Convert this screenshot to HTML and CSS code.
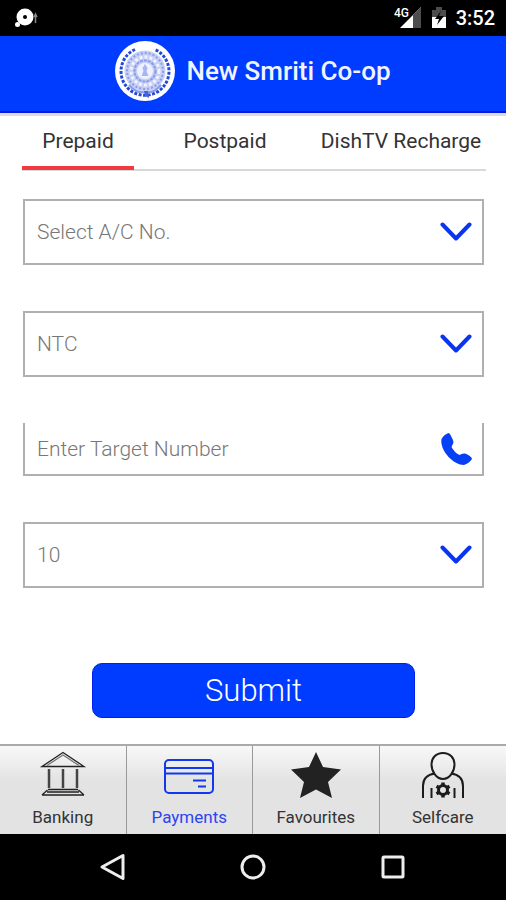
FILE: index.html
```html
<!DOCTYPE html>
<html lang="en">
<head>
    <meta charset="UTF-8">
    <meta name="viewport" content="width=device-width, initial-scale=1.0">
    <title>New Smriti Co-op</title>
    <link rel="stylesheet" href="styles.css">
</head>
<body>
    <div class="status-bar">
        <svg width="24" height="20" viewBox="0 0 24 20">
            <circle cx="10" cy="9" r="8.5" fill="#fff"/>
            <circle cx="10" cy="9" r="2" fill="#000"/>
            <circle cx="2.5" cy="16.5" r="2.5" fill="#fff"/>
            <path d="M20.5 7v8M19 9l1.5-3 1.5 3" fill="none" stroke="#888" stroke-width="1.5"/>
        </svg>
        <div class="status-right">
            <svg width="28" height="24" viewBox="0 0 28 24">
                <path d="M6 22L27 1v21z" fill="#fff"/>
                <path d="M19 9l8-8v21h-8z" fill="#4d4d4d"/>
                <path d="M0 0h15v11H0z" fill="#000"/>
                <text x="0" y="11" class="network">4G</text>
            </svg>
            <svg width="16" height="24" viewBox="0 0 16 24">
                <path d="M1 4h4V1h6v3h4v8H1z" fill="#4d4d4d"/>
                <path d="M1 11h14v11H1z" fill="#fff"/>
                <path d="M10 5l-6 8h4l-2 6 7-9H8z" fill="#000"/>
            </svg>
            <span class="time">3:52</span>
        </div>
    </div>

    <header class="header">
        <svg width="60" height="60" viewBox="0 0 60 60">
            <circle cx="30" cy="30" r="30" fill="#fff"/>
            <path d="M20 8.5A24 24 0 1 0 40 8.5" fill="none" stroke="#2447dc" stroke-width="3" stroke-dasharray="3 1.5"/>
            <circle cx="30" cy="30" r="20.5" fill="#c6cff5"/>
            <circle cx="30" cy="30" r="18" fill="none" stroke="#8b9ce8" stroke-width="2" stroke-dasharray="2 2"/>
            <circle cx="30" cy="30" r="14" fill="none" stroke="#f0f3ff" stroke-width="3" stroke-dasharray="3 2"/>
            <circle cx="30" cy="30" r="10.5" fill="none" stroke="#8b9ce8" stroke-width="2" stroke-dasharray="3 1"/>
            <circle cx="30" cy="30" r="8" fill="#eef1ff"/>
            <path d="M30 23l2.5 4-1 3 2 5h-7l2-5-1-3z" fill="#a8b6ef"/>
            <path d="M14 44q8 9 16 7 8 2 16-7" fill="none" stroke="#8b9ce8" stroke-width="2"/>
            <path d="M29 50h4l1 7-4-2z" fill="#4764dd"/>
        </svg>
        <h1>New Smriti Co-op</h1>
    </header>

    <main>
        <nav class="tabs">
            <a href="#prepaid" class="active">Prepaid</a>
            <a href="#postpaid">Postpaid</a>
            <a href="#dishtv">DishTV Recharge</a>
        </nav>

        <form class="form">
            <div class="field">
                <select aria-label="Account number">
                    <option>Select A/C No.</option>
                </select>
                <svg width="32" height="20" viewBox="0 0 32 20"><path d="M2.5 2.5L16 16.5 29.5 2.5" class="chevron"/></svg>
            </div>
            <div class="field">
                <select aria-label="Operator">
                    <option>NTC</option>
                </select>
                <svg width="32" height="20" viewBox="0 0 32 20"><path d="M2.5 2.5L16 16.5 29.5 2.5" class="chevron"/></svg>
            </div>
            <div class="field number">
                <input type="tel" placeholder="Enter Target Number" aria-label="Target number">
                <svg width="32" height="32" viewBox="0 0 32 32">
                    <path d="M8.500 0Q4 1.500 1.500 6C-.5 17 13 32 24 32Q29 30.500 32 26Q31.500 23 25 20.500Q22 20 19.500 22 14 19 11.500 14L13.500 9.500 13 7 10.500 2Q9.500 0 8.500 0z" fill="#0540f5"/>
                </svg>
            </div>
            <div class="field">
                <select aria-label="Amount">
                    <option>10</option>
                </select>
                <svg width="32" height="20" viewBox="0 0 32 20"><path d="M2.5 2.5L16 16.5 29.5 2.5" class="chevron"/></svg>
            </div>
            <button type="submit" class="submit">Submit</button>
        </form>
    </main>

    <nav class="bottom-nav">
        <a href="#banking">
            <svg width="50" height="48" viewBox="0 0 50 48" fill="none" stroke="#222" stroke-width="1.3">
                <path d="M4 15.5L25 1.5l21 14z"/>
                <path d="M9 14.5L25 4l16 10.500" stroke="#777"/>
                <path d="M11 18v19M25 18v19M39 18v19" stroke-width="2.5" stroke="#444"/>
                <path d="M10 38.5h30M4 44h42M9.5 39L4 44M40.5 39L46 44M9 41h32"/>
            </svg>
            <span>Banking</span>
        </a>
        <a href="#payments" class="active">
            <svg width="50" height="48" viewBox="0 0 50 48" fill="none" stroke="#1238ee" stroke-width="2">
                <rect x="1" y="9" width="48" height="33" rx="4"/>
                <path d="M1 17h48M1 22.5h48M29 29.5h13M34 35.5h8"/>
            </svg>
            <span>Payments</span>
        </a>
        <a href="#favourites">
            <svg width="50" height="48" viewBox="0 0 50 48">
                <path d="M25 1l7 15 18 2.5-13 12.5L41 47 25 38.5 9 47l4-16L0 18.5 18 16z" fill="#222"/>
            </svg>
            <span>Favourites</span>
        </a>
        <a href="#selfcare">
            <svg width="50" height="48" viewBox="0 0 50 48" fill="none" stroke="#1c1c1c" stroke-width="2">
                <path d="M25 2c-7 0-11.5 5-11.5 11.5C13.5 20 18 28 25 28s11.5-8 11.5-14.5C36.5 7 32 2 25 2z"/>
                <path d="M17 22.5Q5 24 5 35v12M33 22.5q12 1.5 12 12.5v12M13.5 37v10M36.5 37v10"/>
                <circle cx="25" cy="39" r="4.5" stroke-width="3"/>
                <path d="M25 31.5v4M25 42.5v4M18.5 35.2l3.5 2M28 40.8l3.5 2M31.5 35.2l-3.5 2M22 40.8l-3.5 2" stroke-width="3.5"/>
            </svg>
            <span>Selfcare</span>
        </a>
    </nav>

    <div class="system-nav">
        <button type="button" aria-label="Back">
            <svg width="28" height="28" viewBox="0 0 28 28"><path d="M3 14L24 2.5v23z"/></svg>
        </button>
        <button type="button" aria-label="Home">
            <svg width="28" height="28" viewBox="0 0 28 28"><circle cx="14" cy="14" r="11"/></svg>
        </button>
        <button type="button" aria-label="Recent apps">
            <svg width="28" height="28" viewBox="0 0 28 28"><rect x="4" y="4" width="20" height="20" rx="1"/></svg>
        </button>
    </div>
</body>
</html>
```
FILE: styles.css
```css
* {
    box-sizing: border-box;
}
body {
    margin: 0;
    min-height: 100vh;
    display: flex;
    flex-direction: column;
    font-family: Roboto, sans-serif;
    background: #fff;
}
a {
    text-decoration: none;
    color: #333;
}
svg {
    display: block;
    flex-shrink: 0;
}

/* status bar */
.status-bar {
    display: flex;
    align-items: center;
    justify-content: space-between;
    height: 36px;
    padding: 0 11px 0 15px;
    background: #000;
    color: #fff;
}
.status-right {
    display: flex;
    align-items: center;
    gap: 9px;
}
.network {
    font-size: 12px;
    font-weight: 500;
    fill: #fff;
}
.time {
    font-size: 20px;
    font-weight: 500;
}

/* header */
.header {
    display: flex;
    align-items: center;
    justify-content: center;
    gap: 11px;
    height: 80px;
    padding-bottom: 8px;
    background: #003cff;
    border-bottom: 3px solid #dcd8e4;
    box-shadow: inset 0 -2px 0 #0018e0;
}
.header h1 {
    margin: 0;
    font-size: 26px;
    font-weight: 500;
    color: #f0f4ff;
}

/* tabs */
main {
    flex: 1;
}
.tabs {
    display: grid;
    grid-template-columns: 112px 1fr 170px;
    height: 55px;
    margin: 0 20px 0 22px;
    border-bottom: 2px solid #d8d8d8;
}
.tabs a {
    height: 54px;
    padding-top: 13px;
    font-size: 21px;
    line-height: 25px;
    text-align: center;
    white-space: nowrap;
}
.tabs .active {
    border-bottom: 4px solid #f03a40;
}

/* form */
.form {
    display: flex;
    flex-direction: column;
    gap: 46px;
    padding: 28px 22px 26px 23px;
}
.field {
    display: grid;
    align-items: center;
    height: 66px;
    border: 2px solid #b0b0b0;
}
.field select,
.field input,
.field svg {
    grid-area: 1 / 1;
}
.field select,
.field input {
    appearance: none;
    width: 100%;
    height: 100%;
    padding: 0 50px 0 12px;
    border: 0;
    border-radius: 0;
    background: transparent;
    font-family: inherit;
    font-size: 21px;
    font-weight: 300;
    color: #777;
}
.field input::placeholder {
    color: #777;
}
.field svg {
    justify-self: end;
    margin-right: 10px;
    pointer-events: none;
}
.number {
    height: 53px;
    border-top: 0;
}
.chevron {
    fill: none;
    stroke: #0a35ee;
    stroke-width: 4;
    stroke-linecap: round;
    stroke-linejoin: round;
}
.submit {
    align-self: center;
    width: 70%;
    height: 55px;
    margin-top: 29px;
    border: 1px solid #0020e8;
    border-radius: 10px;
    background: #003cff;
    font-family: inherit;
    font-size: 31px;
    font-weight: 300;
    color: #fff;
}

/* bottom navigation */
.bottom-nav {
    display: grid;
    grid-template-columns: repeat(4, 1fr);
    height: 90px;
    border-top: 2px solid #aaa;
    background: linear-gradient(#f8f8f8, #e3e3e3 40%, #e3e3e3);
}
.bottom-nav a {
    display: flex;
    flex-direction: column;
    align-items: center;
    gap: 8px;
    padding-top: 5px;
    border-right: 1px solid #999;
    font-size: 17px;
    line-height: 20px;
}
.bottom-nav a:last-child {
    border-right: 0;
}
.bottom-nav .active {
    color: #2a45f5;
}

/* android buttons */
.system-nav {
    display: flex;
    justify-content: center;
    gap: 112px;
    height: 66px;
    background: #000;
}
.system-nav button {
    padding: 0;
    border: 0;
    background: none;
}
.system-nav svg {
    fill: none;
    stroke: #eee;
    stroke-width: 3;
    stroke-linejoin: round;
}
```
